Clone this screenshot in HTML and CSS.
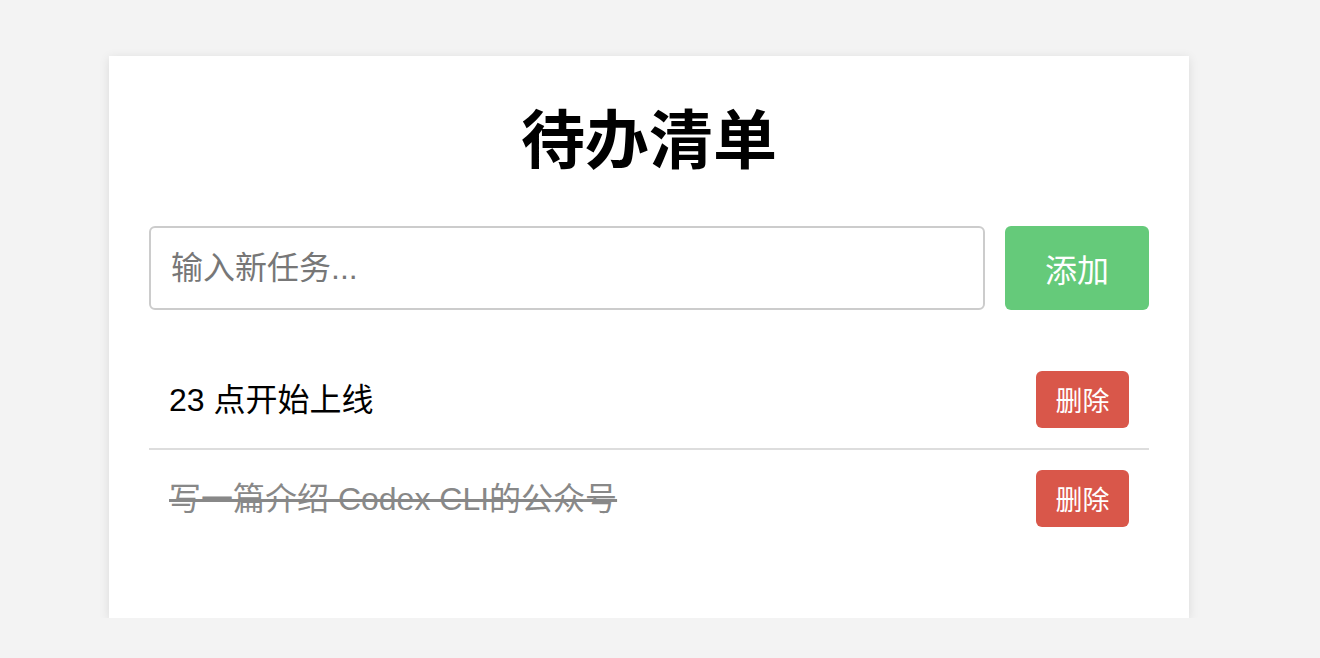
FILE: index.html
```html
<!DOCTYPE html>
<html lang="zh-CN">
<head>
<meta charset="utf-8">
<title>待办清单</title>
<link rel="stylesheet" href="styles.css">
</head>
<body>
<div class="card">
  <h1 class="title">待办清单</h1>
  <div class="form">
    <input class="task-input" type="text" placeholder="输入新任务...">
    <button class="add-btn">添加</button>
  </div>
  <ul class="list">
    <li class="item">
      <span class="item-text">23 点开始上线</span>
      <button class="del-btn">删除</button>
    </li>
    <li class="item done">
      <span class="item-text">写一篇介绍 Codex CLI的公众号</span>
      <button class="del-btn">删除</button>
    </li>
  </ul>
</div>
</body>
</html>
```

FILE: styles.css
```css
html, body {
  margin: 0;
  padding: 0;
}
body {
  background: #f3f3f3;
  font-family: "Liberation Sans", "Noto Sans CJK SC", sans-serif;
  color: #000;
}
.card {
  box-sizing: border-box;
  width: 1080px;
  margin: 56px 0 0 109px;
  padding: 40px;
  background: #fff;
  box-shadow: 0 2px 10px rgba(0, 0, 0, 0.10);
}
.title {
  margin: 0 0 40px 0;
  font-size: 64px;
  line-height: 90px;
  font-weight: bold;
  text-align: center;
}
.form {
  display: flex;
  gap: 20px;
}
.task-input {
  flex: 1;
  box-sizing: border-box;
  height: 84px;
  padding: 0 20px;
  border: 2px solid #ccc;
  border-radius: 6px;
  font-family: inherit;
  font-size: 32px;
  color: #000;
  outline: none;
}
.task-input::placeholder {
  color: #777;
}
.add-btn {
  box-sizing: border-box;
  width: 144px;
  height: 84px;
  border: none;
  border-radius: 6px;
  background: #65ca7a;
  color: #fff;
  font-family: inherit;
  font-size: 32px;
  padding: 0;
}
.list {
  list-style: none;
  margin: 41px 0 0 0;
  padding: 0 0 31px 0;
}
.item {
  display: flex;
  align-items: center;
  justify-content: space-between;
  padding: 20px 20px;
  border-bottom: 2px solid #ddd;
}
.item:last-child {
  border-bottom: none;
}
.item-text {
  font-size: 32px;
  line-height: 40px;
}
.done .item-text {
  color: #888;
  text-decoration: line-through;
}
.del-btn {
  box-sizing: border-box;
  width: 93px;
  height: 57px;
  padding: 0;
  border: none;
  border-radius: 6px;
  background: #d9574a;
  color: #fff;
  font-family: inherit;
  font-size: 27px;
}
```
